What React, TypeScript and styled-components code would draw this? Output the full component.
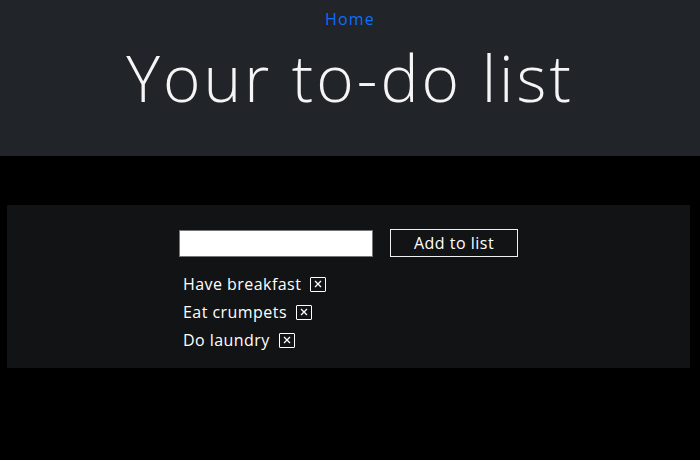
import React, { useState } from "react";
import styled, { createGlobalStyle } from "styled-components";

const GlobalStyle = createGlobalStyle`
  html, body { margin: 0; padding: 0; background: #000; }
  body { font-family: "Open Sans", "Noto Sans", sans-serif; color: #fff; }
  * { box-sizing: border-box; }
`;

const Header = styled.header`
  background: #212429;
  height: 156px;
  display: flex;
  flex-direction: column;
  align-items: center;
  padding-top: 7px;
`;

const NavLink = styled.a`
  color: #0d6efd;
  font-size: 16px;
  line-height: 24px;
  letter-spacing: 1.2px;
  text-decoration: none;
`;

const Title = styled.h1`
  margin: 0;
  font-weight: 300;
  font-size: 64px;
  line-height: 80px;
  letter-spacing: 3px;
  margin-top: 7px;
  color: #f5f5f5;
`;

const Panel = styled.section`
  background: #121315;
  margin: 49px 10px 0 7px;
  padding: 24px 0 14px;
  display: flex;
  justify-content: center;
`;

const Inner = styled.div`
  width: 339px;
  display: flex;
  flex-direction: column;
`;

const Form = styled.form`
  display: flex;
  align-items: center;
  gap: 17px;
  margin-bottom: 13px;
`;

const TextInput = styled.input`
  width: 194px;
  height: 27px;
  background: #fff;
  border: 1px solid #767676;
  padding: 0 4px;
  font-size: 15px;
`;

const AddButton = styled.button`
  width: 128px;
  height: 28px;
  background: transparent;
  color: #fff;
  border: 1px solid #f0f0f0;
  font-family: inherit;
  font-size: 16px;
  letter-spacing: 0.5px;
  cursor: pointer;
  padding: 0;
`;

const List = styled.ul`
  list-style: none;
  margin: 0;
  padding: 0 0 0 4px;
  display: flex;
  flex-direction: column;
`;

const Item = styled.li`
  display: flex;
  align-items: center;
  gap: 9px;
  height: 28px;
  font-size: 16px;
  letter-spacing: 0.45px;
`;

const RemoveButton = styled.button`
  width: 16px;
  height: 15px;
  padding: 0;
  background: transparent;
  border: 1px solid #fff;
  border-radius: 1px;
  color: #fff;
  display: flex;
  align-items: center;
  justify-content: center;
  cursor: pointer;
`;

export default function App() {
  const [items, setItems] = useState(["Have breakfast", "Eat crumpets", "Do laundry"]);
  const [text, setText] = useState("");
  return (
    <>
      <GlobalStyle />
      <Header>
        <NavLink href="#">Home</NavLink>
        <Title>Your to-do list</Title>
      </Header>
      <Panel>
        <Inner>
          <Form
            onSubmit={(e) => {
              e.preventDefault();
              if (text.trim()) setItems([...items, text.trim()]);
              setText("");
            }}
          >
            <TextInput value={text} onChange={(e) => setText(e.target.value)} />
            <AddButton type="submit">Add to list</AddButton>
          </Form>
          <List>
            {items.map((it, i) => (
              <Item key={it + i}>
                {it}
                <RemoveButton onClick={() => setItems(items.filter((_, j) => j !== i))}>
                  <svg width="8" height="8" viewBox="0 0 8 8">
                    <path d="M1 1L7 7M7 1L1 7" stroke="#fff" strokeWidth="1.3" />
                  </svg>
                </RemoveButton>
              </Item>
            ))}
          </List>
        </Inner>
      </Panel>
    </>
  );
}
